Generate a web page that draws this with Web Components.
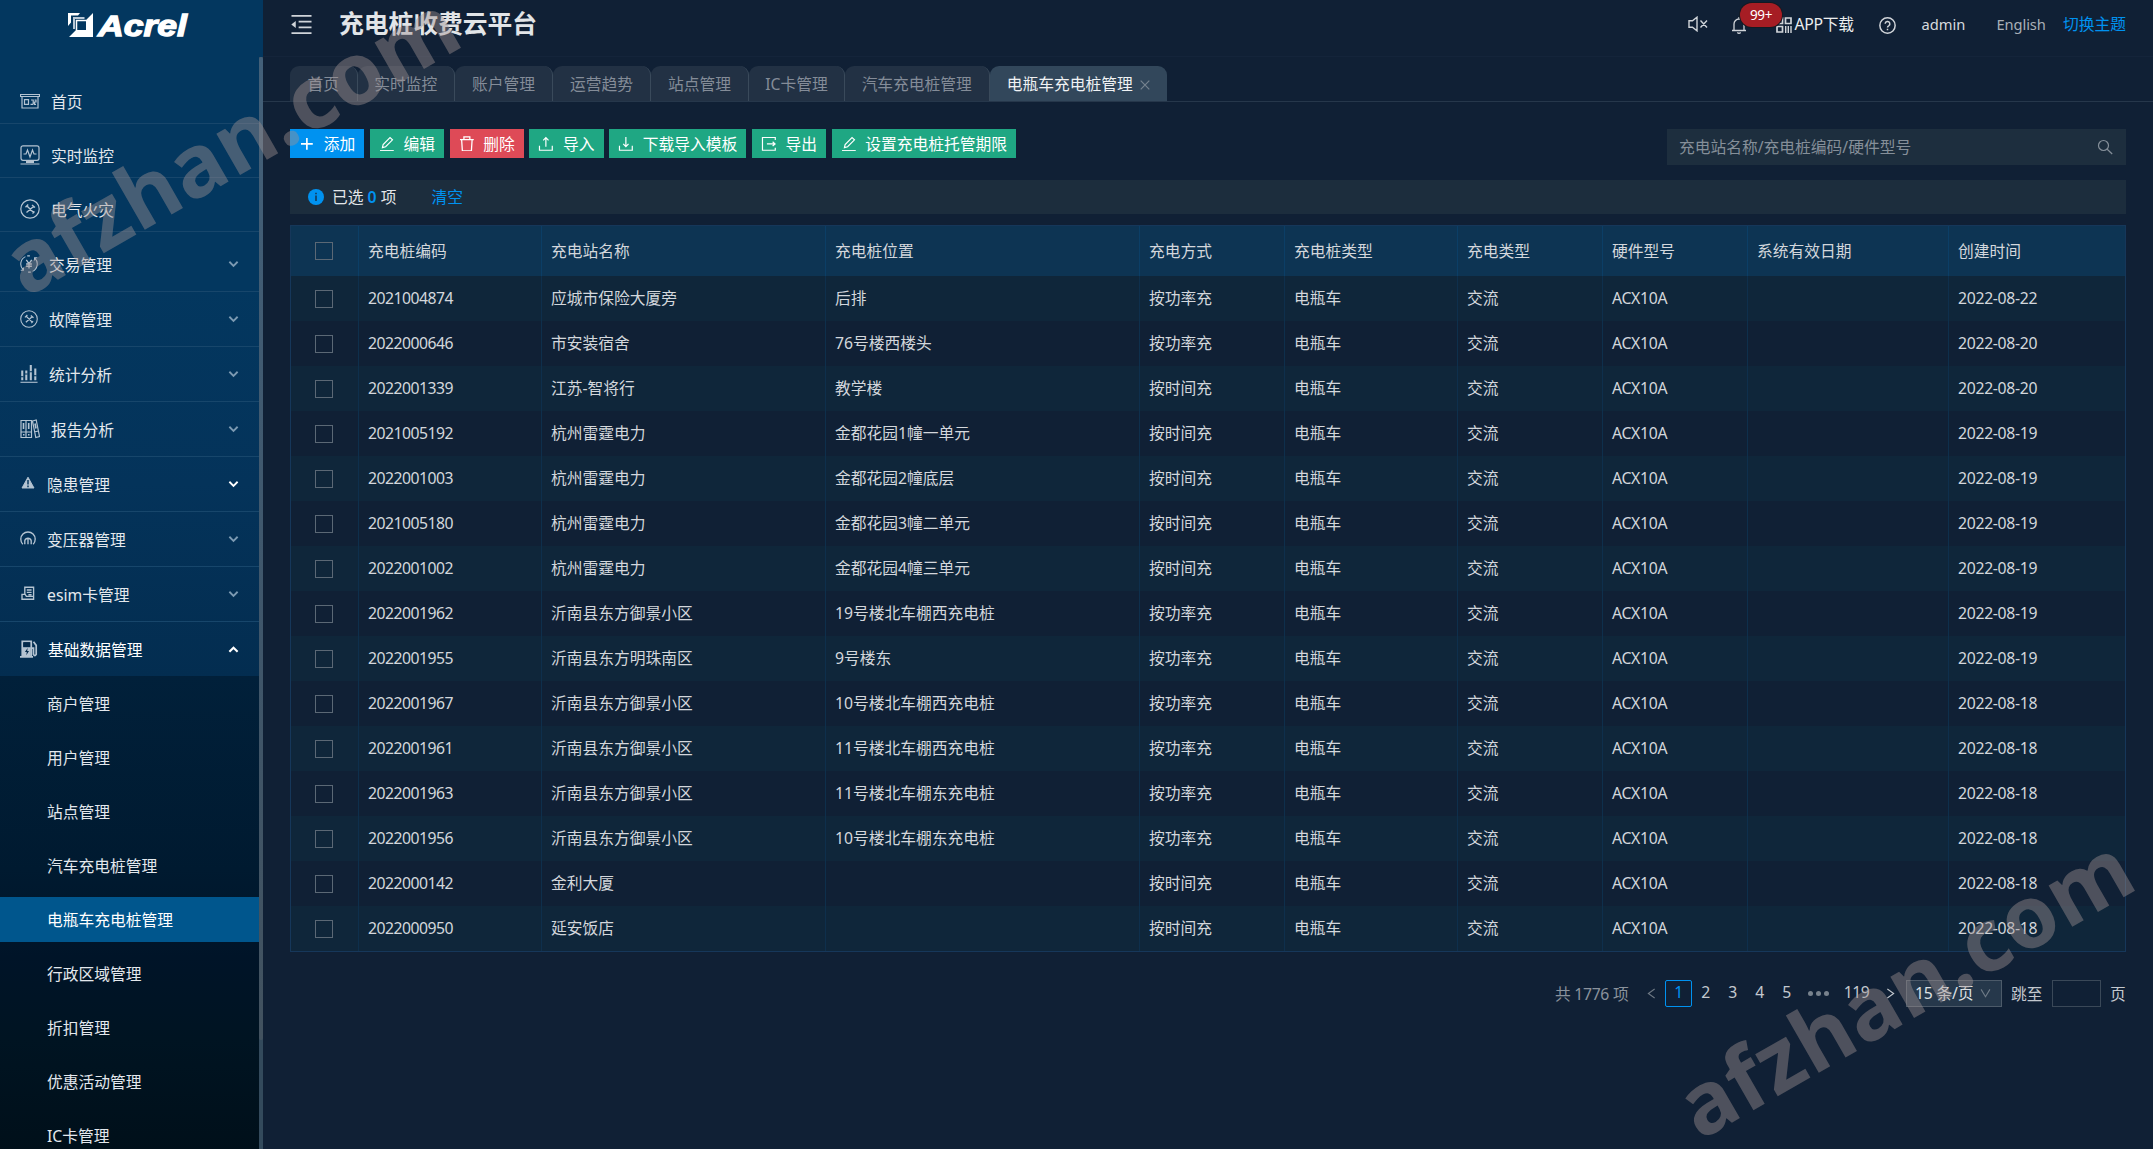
<!DOCTYPE html>
<html lang="zh-CN">
<head>
<meta charset="UTF-8">
<title>充电桩收费云平台</title>
<style>
  html, body { height: 100%; margin: 0; }
  body {
    background: #102035;
    color: #d3d7dc;
    font: 15.75px/1.5 "Noto Sans", "Noto Sans CJK SC", sans-serif;
    overflow: hidden;
    --blue: #0092f0;
    --green: #1fa783;
    --red: #de4a57;
    --panel: #1d2e3e;
  }
</style>
</head>
<body>
<charge-app></charge-app>
<script>
const ICONS = {
  home: ['20 20', '<path d="M.5 3.500h19v2H.5zM2 5.500v11.500h16V5.500"/><path d="M4.500 8.700h4v4.600h-4zM11 9h2.200v4.300M14.500 9H16v2h-1.500v2.300H16M10.500 13.300h2.700"/>'],
  monitor: ['20 20', '<rect x="1" y=".8" width="18" height="14.500" rx="2"/><path d="M3.500 9H6l1.500-4 2.500 7 2.500-7 1.500 4h2.500M.5 19h19"/><path d="M6 17h8" stroke-width="2"/>'],
  tools: ['20 20', '<circle cx="10" cy="10" r="9.200"/><path d="M6.500 6.500l7 7M13.500 7.500l-7 6M5.500 8.200l2.700-2.700M12 6l3 2.500M12.500 14.500l2-2" stroke-width="1.400"/>'],
  money: ['20 20', '<path d="M6 1.800A9.200 9.200 0 0 0 3.500 16.500M14 18.200A9.200 9.200 0 0 0 16.500 3.500M8 1h3M9 19h3M.8 17h3v-3M19.200 3h-3v3"/><path d="M7 5.500l3 4 3-4M6.800 10h6.400M6.800 12.500h6.400M10 9.500V15" stroke-width="1.500"/>'],
  chart: ['20 20', '<path d="M.5 19.200h19"/><path d="M2.500 17V6M7 17V6M12 17V0M17 17V4" stroke-width="2.300"/><path d="M1 13h3M5.500 10h3M10.500 7.500h3M15.500 12h3" stroke="#03355a"/>'],
  report: ['20 20', '<path d="M1 1.500h5v17H1zM6 1.500h5.500v17H6zM12.500 2l3.700-1 3.300 16.500-3.700 1zM1 13h10.500M14.300 13l4-1"/><path d="M3.500 4v6M8.700 4v6M15 4.500l1 5M3 15.700h1.500M8 15.700h1.500" stroke-width="1.600"/>'],
  warn: ['20 20', '<path d="M10 1.500L17.500 15H2.500z" fill="currentColor" stroke-linejoin="round"/><path d="M10 5v5.500M10 12v2" stroke="#04335a" stroke-width="1.800"/>'],
  gauge: ['20 20', '<path d="M3.500 16.500A9 9 0 1 1 16.500 16.500M6 14.500V12a4.200 4.200 0 0 1 8 0v4.500M6 12v4.500M10 9.500v7" stroke-width="1.700"/>'],
  sim: ['20 20', '<path d="M6 10.500V1.500h11V15M8.500 5h6M8.500 8h6M2.500 10.500h4l1.500 2.500h9v3.500H2.500zM10.500 11h4" stroke-width="1.700"/>'],
  pump: ['20 20', '<path d="M2.500 19V1.500h10V19M0 18.800h14.500M13 9h2v7q1.500 2.500 3 0V6l-3-4" stroke-width="1.900"/><path d="M4 2.500h7V7H4z" fill="#04294a" stroke="none"/><path d="M3 8h9v10H3z" fill="currentColor" stroke="none"/><path d="M8.500 9L5.500 13.200h2L7 17l3-4.800H8z" fill="#04294a" stroke="none"/>'],
  down: ['12 12', '<path d="M1.500 3L6 7.500l4.500-4.500" stroke-width="2"/>'],
  up: ['12 12', '<path d="M1.500 8.500L6 4l4.500 4.500" stroke-width="2.300"/>'],
  fold: ['22 22', '<path d="M.5 2h21M8 8h13.500M8 14h13.500M.5 20h21" stroke-width="1.700"/><path d="M.3 11L5 7.300v7.400z" fill="currentColor" stroke="none"/>'],
  mute: ['20 16', '<path d="M1 4.800h3.500L9 1.200v13.600l-4.500-3.600H1zM12.500 4.500l6.500 7M19 4.500l-6.500 7" stroke-width="1.400"/>'],
  bell: ['16 18', '<path d="M1 14.500h14M3 14.500V8a5 5 0 0 1 10 0v6.500M8 3V1M6.300 16.500q1.700 1.500 3.400 0" stroke-width="1.300"/>'],
  qr: ['16 16', '<path d="M1 1h5.500v5.500H1zM9.500 1H15v5.500H9.500zM1 9.500h5.500V15H1z" stroke-width="1.700"/><path d="M9.700 9v7M12.300 9v7M15 9v7" stroke-width="1.400"/>'],
  help: ['16 16', '<circle cx="8" cy="8" r="7.200" stroke-width="1.400"/><path d="M5.800 6.400a2.200 2.200 0 1 1 3.300 1.900Q8 8.900 8 9.800M8 11v1.500" stroke-width="1.400"/>'],
  plus: ['16 16', '<path d="M8 2v12M2 8h12" stroke-width="1.700"/>'],
  edit: ['16 16', '<path d="M1 15h14" stroke-width="1.400"/><path d="M3.500 11.800l.7-3.200L11.200 1.500l2.500 2.400-7 7z"/>'],
  trash: ['16 16', '<path d="M1 3.700h14M5 3.500V1h6v2.500M2.700 4l.7 11h9.200l.7-11" stroke-width="1.300"/>'],
  upload: ['16 16', '<path d="M1.500 10v4.500h13V10M8 11V2M5.300 4.500L8 1.700l2.700 2.800" stroke-width="1.200"/>'],
  download: ['16 16', '<path d="M1.500 10v4.500h13V10M8 1v9.500M5.300 8L8 10.800 10.700 8" stroke-width="1.200"/>'],
  out: ['16 16', '<path d="M14.500 4V1.500h-13v13h13V12M6 8h8M11.800 5.800L14.300 8l-2.500 2.200" stroke-width="1.200"/>'],
  info: ['16 16', '<circle cx="8" cy="8" r="8" fill="currentColor" stroke="none"/><path d="M8 3.800v1.400M8 6.500v5.500" stroke="#14334f" stroke-width="1.500"/>'],
  search: ['16 16', '<circle cx="6.500" cy="6.500" r="5"/><path d="M10.200 10.200l5 4.800"/>'],
  close: ['10 10', '<path d="M.7.7l8.600 8.600M9.300.7L.7 9.300"/>'],
  left: ['10 14', '<path d="M8.500 2L1.500 7l7 5"/>'],
  right: ['10 14', '<path d="M1.500 2l7 5-7 5"/>'],
  caret: ['12 12', '<path d="M1.200 1.500L6 9.500l4.800-8"/>']
};

// Renders one glyph, sized by the w / h attributes
class UiIcon extends HTMLElement {
  constructor() {
    super();
    this.attachShadow({ mode: 'open' });
  }

  connectedCallback() {
    const [size, body] = ICONS[this.getAttribute('name')];
    const w = this.getAttribute('w') || 16;
    const h = this.getAttribute('h') || w;
    this.shadowRoot.innerHTML = `
      <style>
        :host { display: block; flex: none; width: ${w}px; height: ${h}px; }
        svg { display: block; width: 100%; height: 100%; fill: none; stroke: currentColor; stroke-width: 1.2; }
      </style>
      <svg viewBox="0 0 ${size}">${body}</svg>
    `;
  }
}

class BrandLogo extends HTMLElement {
  constructor() {
    super();
    this.attachShadow({ mode: 'open' }).innerHTML = `
      <style>
        :host { display: block; flex: none; height: 79px; }
        svg { display: block; margin-left: 67px; }
        text { font: italic 900 30px "Liberation Sans", sans-serif; fill: #fff; stroke: #fff; stroke-width: 1.300; }
      </style>
      <svg width="130" height="44" viewBox="0 0 130 44">
        <path d="M1 13h12l-2 2.500H4v7L1 26z" fill="#fff"/>
        <path d="M7 29V18h10.500" fill="none" stroke="#b9c8d6" stroke-width="2"/>
        <path d="M26 13v24H2l7-7h10V20z" fill="#fff"/>
        <path d="M9.500 30V20.500H19" fill="none" stroke="#fff" stroke-width="1.500"/>
        <text x="31" y="36" textLength="89" lengthAdjust="spacingAndGlyphs">Acrel</text>
      </svg>
    `;
  }
}

class MenuEntry extends HTMLElement {
  constructor() {
    super();
    this.attachShadow({ mode: 'open' });
  }

  connectedCallback() {
    const icon = this.getAttribute('icon');
    const kind = this.getAttribute('kind');
    const size = this.getAttribute('size') || 20;
    const arrow = kind === 'group' ? 'down' : kind === 'open' ? 'up' : '';
    this.shadowRoot.innerHTML = `
      <style>
        :host {
          display: flex;
          flex: none;
          align-items: center;
          box-sizing: border-box;
          padding: 0 20px;
          color: #e3e8ed;
          white-space: nowrap;
        }
        :host([kind="leaf"]) { height: 45px; margin-bottom: 9px; border-bottom: 1px solid #17466b; }
        :host([kind="group"]) { height: 55px; border-bottom: 1px solid #17466b; }
        :host([kind="open"]) { height: 54px; color: #fff; }
        :host([kind="sub"]) { height: 45px; margin-bottom: 9px; padding: 1px 0 0 47px; }
        :host([selected]) { background: #00568d; color: #fff; }
        .icon { color: #b5c4d2; margin-right: ${this.getAttribute('gap') || 11}px; }
        .arrow { margin-left: auto; color: ${this.hasAttribute('bright') || kind === 'open' ? '#fff' : '#7c9ab2'}; }
        slot { display: block; padding-top: ${kind === 'sub' ? 1 : 3}px; }
      </style>
      ${icon ? `<ui-icon class="icon" name="${icon}" w="${size}"></ui-icon>` : ''}
      <slot></slot>
      ${arrow ? `<ui-icon class="arrow" name="${arrow}" w="11"></ui-icon>` : ''}
    `;
  }
}

class SideMenu extends HTMLElement {
  constructor() {
    super();
    this.attachShadow({ mode: 'open' }).innerHTML = `
      <style>
        :host { display: flex; flex: none; width: 263px; height: 100%; overflow: hidden;
          background: linear-gradient(#03375f 0, #03375f 25%, #04335a 42%, #032d50 59%); }
        nav { display: flex; flex-direction: column; width: 259px; }
        .groups { margin-top: -4px; }
        .sub { flex: none; height: 480px; padding-top: 5px;
          background: linear-gradient(#01203a, #001a30 40%, #001428 58%, #001422 75%, #000f19); }
        .rail { width: 4px; margin-top: 57px; background: #334a5c; }
        .thumb { height: 983px; border-radius: 2px; background: linear-gradient(#436079, #3f566a 60%, #42525f); }
      </style>
      <nav>
        <brand-logo></brand-logo>
        <menu-entry kind="leaf" icon="home">首页</menu-entry>
        <menu-entry kind="leaf" icon="monitor">实时监控</menu-entry>
        <menu-entry kind="leaf" icon="tools">电气火灾</menu-entry>
        <div class="groups">
          <menu-entry kind="group" icon="money" size="18">交易管理</menu-entry>
          <menu-entry kind="group" icon="tools" size="18">故障管理</menu-entry>
          <menu-entry kind="group" icon="chart" size="18">统计分析</menu-entry>
          <menu-entry kind="group" icon="report">报告分析</menu-entry>
          <menu-entry kind="group" icon="warn" size="16" bright>隐患管理</menu-entry>
          <menu-entry kind="group" icon="gauge" size="16">变压器管理</menu-entry>
          <menu-entry kind="group" icon="sim" size="16">esim卡管理</menu-entry>
          <menu-entry kind="open" icon="pump" size="18" gap="10">基础数据管理</menu-entry>
        </div>
        <div class="sub">
          <menu-entry kind="sub">商户管理</menu-entry>
          <menu-entry kind="sub">用户管理</menu-entry>
          <menu-entry kind="sub">站点管理</menu-entry>
          <menu-entry kind="sub">汽车充电桩管理</menu-entry>
          <menu-entry kind="sub" selected>电瓶车充电桩管理</menu-entry>
          <menu-entry kind="sub">行政区域管理</menu-entry>
          <menu-entry kind="sub">折扣管理</menu-entry>
          <menu-entry kind="sub">优惠活动管理</menu-entry>
          <menu-entry kind="sub">IC卡管理</menu-entry>
        </div>
      </nav>
      <div class="rail"><div class="thumb"></div></div>
    `;
  }
}

class AppHeader extends HTMLElement {
  constructor() {
    super();
    this.attachShadow({ mode: 'open' }).innerHTML = `
      <style>
        :host { display: flex; flex: none; box-sizing: border-box; height: 57px; padding: 0 27px 8px 28px;
          align-items: center; border-bottom: 1px solid #14243a; white-space: nowrap; }
        h1 { margin: 0 auto 0 27px; font-size: 24.75px; line-height: 36px; color: #e2e5e8; }
        ui-icon { color: #d0d4d9; }
        .tools { display: grid; align-items: center; color: #d6dade; padding-top: 1px;
          grid-template-columns: 43px 44.500px 103px 43px 75px 66.500px 63px; }
        .tools > ui-icon[name="mute"] { margin-top: -2px; }
        .tools > ui-icon[name="help"] { margin-top: 2px; }
        .bell { position: relative; width: 16px; }
        .badge { position: absolute; left: 9px; top: -13px; z-index: 1; box-sizing: border-box; width: 42px; height: 24px;
          border-radius: 12px; background: #a61d24; box-shadow: 0 0 0 1px #141a22; color: #fff;
          font-size: 13.500px; line-height: 24px; text-align: center; letter-spacing: -.4px; }
        .app { display: flex; align-items: center; gap: 3px; color: #eceeef; letter-spacing: -.3px; }
        .latin { font-size: 14.700px; }
        .lang { color: #a9afb7; letter-spacing: -.1px; }
        .theme { color: var(--blue); }
      </style>
      <ui-icon name="fold" w="21"></ui-icon>
      <h1>充电桩收费云平台</h1>
      <div class="tools">
        <ui-icon name="mute" w="20" h="16"></ui-icon>
        <span class="bell"><ui-icon name="bell" w="16" h="18"></ui-icon><span class="badge">99+</span></span>
        <span class="app"><ui-icon name="qr" w="16"></ui-icon>APP下载</span>
        <ui-icon name="help" w="17"></ui-icon>
        <span class="latin">admin</span>
        <span class="latin lang">English</span>
        <span class="theme">切换主题</span>
      </div>
    `;
  }
}

class TabBar extends HTMLElement {
  constructor() {
    super();
    this.attachShadow({ mode: 'open' });
  }

  connectedCallback() {
    const tabs = ['首页', '实时监控', '账户管理', '运营趋势', '站点管理', 'IC卡管理', '汽车充电桩管理', '电瓶车充电桩管理'];
    const widths = [67.5, 97.5, 98, 98, 98, 96, 144.5, 177.5];
    const last = tabs.length - 1;
    this.shadowRoot.innerHTML = `
      <style>
        :host { display: flex; flex: none; box-sizing: border-box; height: 45px; padding: 9px 0 0 27px; border-bottom: 1px solid #26374b; }
        .tab { display: flex; align-items: center; justify-content: center; gap: 7px; box-sizing: border-box; padding-top: 2px;
          border-right: 1px solid #3a4a5b; border-radius: 9px 9px 0 0; background: #223144; color: #848c98; white-space: nowrap; }
        .tab.active { background: #32475b; color: #f0f2f4; border: none; }
        ui-icon { color: #76838f; }
      </style>
      ${tabs.map((t, i) => `
        <div class="tab ${i === last ? 'active' : ''}" style="width:${widths[i]}px">${t}${i === last ? '<ui-icon name="close" w="10"></ui-icon>' : ''}</div>
      `).join('')}
    `;
  }
}

class ToolButton extends HTMLElement {
  constructor() {
    super();
    this.attachShadow({ mode: 'open' });
  }

  connectedCallback() {
    this.shadowRoot.innerHTML = `
      <style>
        :host { display: flex; align-items: center; gap: 9px; height: 29px; padding: 0 9px;
          background: var(--green); color: #fff; white-space: nowrap; }
        :host([type="primary"]) { background: var(--blue); }
        :host([type="danger"]) { background: var(--red); }
        slot { display: block; line-height: 28px; padding-top: 1px; }
      </style>
      <ui-icon name="${this.getAttribute('icon')}" w="15.750"></ui-icon><slot></slot>
    `;
  }
}

class SearchBox extends HTMLElement {
  constructor() {
    super();
    this.attachShadow({ mode: 'open' }).innerHTML = `
      <style>
        :host { display: flex; align-items: center; justify-content: space-between; box-sizing: border-box;
          width: 459px; height: 36px; padding: 2px 13px 0 12px; background: var(--panel); color: #858f99; }
        ui-icon { margin-bottom: 3px; }
      </style>
      <slot></slot><ui-icon name="search" w="16"></ui-icon>
    `;
  }
}

class SelectNotice extends HTMLElement {
  constructor() {
    super();
    this.attachShadow({ mode: 'open' }).innerHTML = `
      <style>
        :host { display: flex; align-items: center; flex: none; box-sizing: border-box; height: 34px; margin: 15px 0 11px; padding: 2px 0 0 18px;
          background: #1c2d3d; color: #e3e6e9; }
        ui-icon { color: var(--blue); margin: 0 8px 2px 0; }
        b { color: var(--blue); font-weight: 600; }
        a { color: var(--blue); margin-left: 35px; }
      </style>
      <ui-icon name="info" w="16"></ui-icon>
      <span>已选 <b>0</b> 项</span><a>清空</a>
    `;
  }
}

const COLUMNS = [
  ['充电桩编码', 183], ['充电站名称', 284], ['充电桩位置', 314], ['充电方式', 145], ['充电桩类型', 173],
  ['充电类型', 145], ['硬件型号', 145], ['系统有效日期', 201], ['创建时间', 176]
];

const PILES = [
  ['2021004874', '应城市保险大厦旁', '后排', '按功率充', '2022-08-22'],
  ['2022000646', '市安装宿舍', '76号楼西楼头', '按功率充', '2022-08-20'],
  ['2022001339', '江苏-智将行', '教学楼', '按时间充', '2022-08-20'],
  ['2021005192', '杭州雷霆电力', '金都花园1幢一单元', '按时间充', '2022-08-19'],
  ['2022001003', '杭州雷霆电力', '金都花园2幢底层', '按时间充', '2022-08-19'],
  ['2021005180', '杭州雷霆电力', '金都花园3幢二单元', '按时间充', '2022-08-19'],
  ['2022001002', '杭州雷霆电力', '金都花园4幢三单元', '按时间充', '2022-08-19'],
  ['2022001962', '沂南县东方御景小区', '19号楼北车棚西充电桩', '按功率充', '2022-08-19'],
  ['2022001955', '沂南县东方明珠南区', '9号楼东', '按功率充', '2022-08-19'],
  ['2022001967', '沂南县东方御景小区', '10号楼北车棚西充电桩', '按功率充', '2022-08-18'],
  ['2022001961', '沂南县东方御景小区', '11号楼北车棚西充电桩', '按功率充', '2022-08-18'],
  ['2022001963', '沂南县东方御景小区', '11号楼北车棚东充电桩', '按功率充', '2022-08-18'],
  ['2022001956', '沂南县东方御景小区', '10号楼北车棚东充电桩', '按功率充', '2022-08-18'],
  ['2022000142', '金利大厦', '', '按时间充', '2022-08-18'],
  ['2022000950', '延安饭店', '', '按时间充', '2022-08-18']
];

class PileTable extends HTMLElement {
  constructor() {
    super();
    this.attachShadow({ mode: 'open' });
  }

  cell(text) {
    const kind = /^\d+$/.test(text) ? 'code' : /^[\w-]+$/.test(text) ? 'latin' : '';
    return `<div class="cell ${kind}">${text}</div>`;
  }

  connectedCallback() {
    const box = '<div class="cell check"><i></i></div>';
    const rows = PILES.map(([code, station, place, mode, date]) =>
      [code, station, place, mode, '电瓶车', '交流', 'ACX10A', '', date]);
    this.shadowRoot.innerHTML = `
      <style>
        :host { display: block; flex: none; border: 1px solid #16375a; }
        .row { display: grid; grid-template-columns: 68px ${COLUMNS.map(c => c[1] + 'px').join(' ')}; height: 45px; }
        .row:nth-child(odd) { background: #0f263a; }
        .row.head { height: 50px; background: #0d3453; }
        .cell { display: flex; align-items: center; box-sizing: border-box; padding: 1px 9px 0; border-right: 1px solid #0e2f4c; white-space: nowrap; }
        .row.head .cell { border-color: #0b3e66; }
        .cell:last-child { border-right: none; }
        .code { letter-spacing: -.52px; }
        .latin { letter-spacing: -.3px; }
        .check { padding: 0 0 0 24px; }
        i { box-sizing: border-box; width: 18px; height: 18px; border: 1px solid #5b6875; }
      </style>
      <div class="row head">${box}${COLUMNS.map(c => this.cell(c[0])).join('')}</div>
      ${rows.map(r => `<div class="row">${box}${r.map(t => this.cell(t)).join('')}</div>`).join('')}
    `;
  }
}

class PageNav extends HTMLElement {
  constructor() {
    super();
    this.attachShadow({ mode: 'open' }).innerHTML = `
      <style>
        :host { display: flex; justify-content: flex-end; margin-top: 28px; height: 27px; line-height: 25px; color: #c3c8ce; white-space: nowrap; }
        .total { width: 83px; line-height: 29px; color: #8a929c; letter-spacing: -.3px; }
        .page { box-sizing: border-box; width: 27px; text-align: center; letter-spacing: -.52px; }
        .now { border: 1px solid var(--blue); border-radius: 2px; color: var(--blue); line-height: 23px; }
        .step { display: flex; align-items: center; justify-content: center; width: 27px; }
        .prev { color: #6f7984; }
        .more { display: flex; align-items: center; justify-content: center; gap: 3px; width: 36px; }
        .more i { width: 5px; height: 5px; border-radius: 50%; background: #78828d; }
        .size { display: flex; align-items: center; justify-content: space-between; box-sizing: border-box; width: 96px; margin: 0 9px 0 2px;
          padding: 0 10px 0 8px; border: 1px solid #4c5a69; background: #26384b; color: #dde0e3; letter-spacing: -.2px; }
        .size ui-icon { color: #6f7b87; }
        .goto { width: 41px; line-height: 29px; }
        .field { box-sizing: border-box; width: 49px; border: 1px solid #3a4858; margin-right: 9px; }
        .unit { width: 16px; line-height: 29px; }
      </style>
      <span class="total">共 1776 项</span>
      <span class="step prev"><ui-icon name="left" w="9" h="13"></ui-icon></span>
      <span class="page now">1</span>
      <span class="page">2</span>
      <span class="page">3</span>
      <span class="page">4</span>
      <span class="page">5</span>
      <span class="more"><i></i><i></i><i></i></span>
      <span class="page" style="width:41px">119</span>
      <span class="step"><ui-icon name="right" w="9" h="13"></ui-icon></span>
      <span class="size">15 条/页<ui-icon name="caret" w="11"></ui-icon></span>
      <span class="goto">跳至</span>
      <span class="field"></span>
      <span class="unit">页</span>
    `;
  }
}

// Diagonal site marks laid over the whole page
class SiteMark extends HTMLElement {
  constructor() {
    super();
    this.attachShadow({ mode: 'open' }).innerHTML = `
      <style>
        :host { position: absolute; inset: 0; pointer-events: none; }
        svg { display: block; width: 100%; height: 100%; }
        text { font: bold 87px "Noto Sans", sans-serif; fill: rgb(160, 147, 147); fill-opacity: .43; }
      </style>
      <svg>
        <text transform="translate(26 298) rotate(-29.900)" textLength="508">afzhan.com</text>
        <text transform="translate(1700 1141) rotate(-29.900)" textLength="508">afzhan.com</text>
      </svg>
    `;
  }
}

class ChargeApp extends HTMLElement {
  constructor() {
    super();
    this.attachShadow({ mode: 'open' }).innerHTML = `
      <style>
        :host { position: relative; display: flex; height: 100vh; overflow: hidden; }
        main { display: flex; flex-direction: column; flex: 1; min-width: 0; }
        .body { display: flex; flex-direction: column; padding: 27px 27px 0; }
        .bar { display: flex; justify-content: space-between; align-items: flex-start; }
        .buttons { display: flex; gap: 5.500px; }
      </style>
      <side-menu></side-menu>
      <main>
        <app-header></app-header>
        <tab-bar></tab-bar>
        <div class="body">
          <div class="bar">
            <div class="buttons">
              <tool-button icon="plus" type="primary">添加</tool-button>
              <tool-button icon="edit">编辑</tool-button>
              <tool-button icon="trash" type="danger">删除</tool-button>
              <tool-button icon="upload">导入</tool-button>
              <tool-button icon="download">下载导入模板</tool-button>
              <tool-button icon="out">导出</tool-button>
              <tool-button icon="edit">设置充电桩托管期限</tool-button>
            </div>
            <search-box>充电站名称/充电桩编码/硬件型号</search-box>
          </div>
          <select-notice></select-notice>
          <pile-table></pile-table>
          <page-nav></page-nav>
        </div>
      </main>
      <site-mark></site-mark>
    `;
  }
}

customElements.define('ui-icon', UiIcon);
customElements.define('brand-logo', BrandLogo);
customElements.define('menu-entry', MenuEntry);
customElements.define('side-menu', SideMenu);
customElements.define('app-header', AppHeader);
customElements.define('tab-bar', TabBar);
customElements.define('tool-button', ToolButton);
customElements.define('search-box', SearchBox);
customElements.define('select-notice', SelectNotice);
customElements.define('pile-table', PileTable);
customElements.define('page-nav', PageNav);
customElements.define('site-mark', SiteMark);
customElements.define('charge-app', ChargeApp);
</script>
</body>
</html>
